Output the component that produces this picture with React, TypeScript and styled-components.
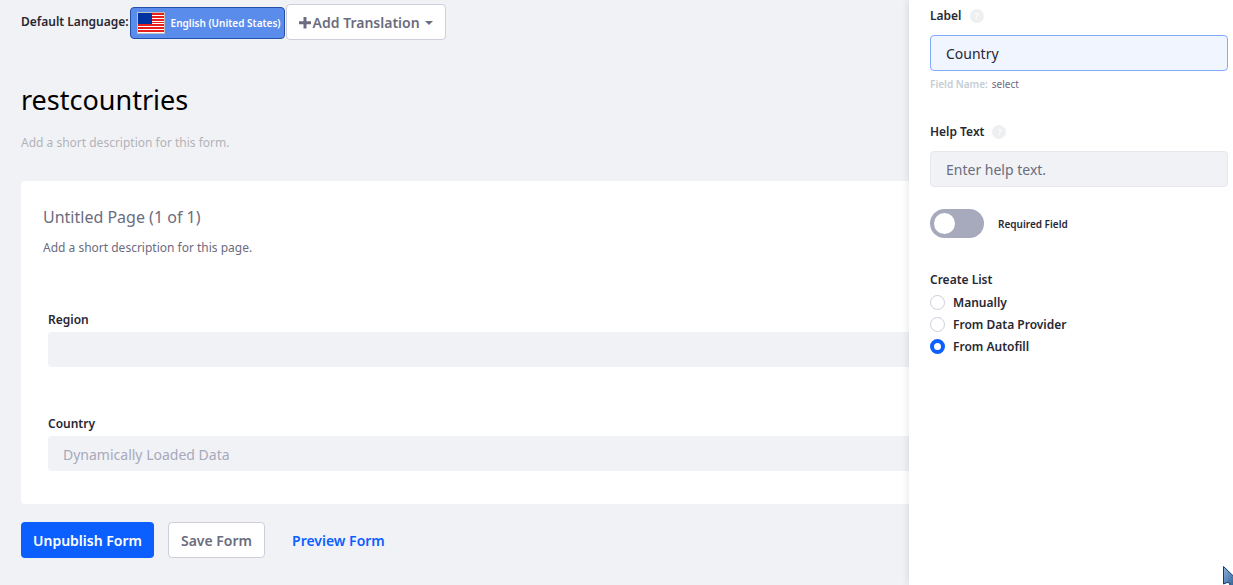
import React from "react";
import styled, { createGlobalStyle, css } from "styled-components";

const GlobalStyle = createGlobalStyle`
  *, *::before, *::after { box-sizing: border-box; }
  body {
    margin: 0;
    background: #f1f2f5;
    color: #272833;
    font-family: "Noto Sans", "Open Sans", sans-serif;
    font-size: 14px;
    line-height: 20px;
  }
  button, input { font: inherit; }
`;

const Layout = styled.div`
  display: grid;
  grid-template-columns: minmax(0, 1fr) 324px;
  min-height: 100vh;
  overflow: hidden;
`;

const Main = styled.main`
  padding: 4px 0 27px 21px;
`;

const Toolbar = styled.div`
  display: flex;
  align-items: center;
  gap: 1px;
  height: 36px;
  white-space: nowrap;
`;

const ToolbarLabel = styled.span`
  font-size: 12px;
  font-weight: 600;
`;

const Button = styled.button<{ $kind: "primary" | "secondary" | "link" | "language" }>`
  display: inline-flex;
  align-items: center;
  justify-content: center;
  height: 36px;
  padding: 2px 12px 0;
  border: 1px solid transparent;
  border-radius: 4px;
  background: transparent;
  font-size: 14px;
  font-weight: 600;
  white-space: nowrap;
  cursor: pointer;
  ${({ $kind }) => $kind === "primary" && css`
    padding: 2px 11px 0;
    background: #0b5fff;
    color: #fff;
  `}
  ${({ $kind }) => $kind === "secondary" && css`
    background: #fff;
    border-color: #cdced9;
    color: #6b6c7e;
  `}
  ${({ $kind }) => $kind === "link" && css`
    color: #0b5fff;
  `}
  ${({ $kind }) => $kind === "language" && css`
    height: 32px;
    margin-top: 2px;
    padding: 0 3px 0 6px;
    gap: 6px;
    background: #5a8cec;
    border-color: #2450a8;
    color: #fff;
    font-size: 10px;
  `}
`;

const Title = styled.h1`
  margin: 40px 0 0;
  color: #000;
  font-size: 27px;
  font-weight: 400;
  line-height: 40px;
`;

const FormDescription = styled.p`
  margin: 13px 0 28px;
  color: #b3b3b8;
  font-size: 12px;
`;

const Card = styled.section`
  min-height: 323px;
  padding: 24px 0 32px 22px;
  background: #fff;
  border-radius: 4px 0 0 4px;
`;

const PageTitle = styled.h2`
  margin: 0;
  color: #6b6c7e;
  font-size: 16px;
  font-weight: 400;
  line-height: 24px;
`;

const PageDescription = styled.p`
  margin: 9px 0 52px;
  color: #6b6c7e;
  font-size: 12px;
`;

const Field = styled.div`
  padding-left: 5px;
  & + & { margin-top: 47px; }
`;

const FieldLabel = styled.label`
  display: block;
  margin-bottom: 2px;
  font-size: 12px;
  font-weight: 600;
`;

const FieldInput = styled.input`
  display: block;
  width: 100%;
  height: 35px;
  padding: 2px 15px 0;
  border: 0;
  border-radius: 4px 0 0 4px;
  background: #f1f2f5;
  color: #272833;
  font-size: 14px;
  &::placeholder { color: #a7a9bc; opacity: 1; }
`;

const Actions = styled.div`
  display: flex;
  gap: 14px;
  margin-top: 18px;
`;

const Sidebar = styled.aside`
  position: relative;
  padding: 6px 5px 20px 21px;
  background: #fff;
  box-shadow: 0 0 8px rgba(39, 40, 51, 0.15);
`;

const LabelRow = styled.div`
  display: flex;
  align-items: center;
  gap: 8px;
  margin-bottom: 9px;
  font-size: 12px;
  font-weight: 600;
`;

const Help = styled.span`
  width: 14px;
  height: 14px;
  border-radius: 50%;
  background: #eeeff0;
  color: #fff;
  font-size: 9px;
  line-height: 14px;
  text-align: center;
`;

const TextInput = styled.input<{ $active?: boolean }>`
  display: block;
  width: 100%;
  height: 36px;
  padding: 0 15px;
  border: 1px solid ${({ $active }) => ($active ? "#80acff" : "#e7e7ed")};
  border-radius: 4px;
  background: ${({ $active }) => ($active ? "#f0f5ff" : "#f1f2f5")};
  color: #272833;
  font-size: 14px;
  outline: none;
  &::placeholder { color: #6b6c7e; opacity: 1; }
`;

const FieldName = styled.p`
  display: flex;
  gap: 4px;
  margin: 3px 0 28px;
  color: #6b6c7e;
  font-size: 10px;
  strong { color: #c4cdd5; font-weight: 600; }
`;

const ToggleLabel = styled.label`
  display: flex;
  align-items: center;
  gap: 14px;
  margin-top: 22px;
  font-size: 10px;
  font-weight: 600;
`;

const Toggle = styled.input`
  appearance: none;
  width: 54px;
  height: 29px;
  margin: 0;
  padding: 4px;
  border-radius: 15px;
  background: #a7a9bc;
  &::before {
    content: "";
    display: block;
    width: 21px;
    height: 21px;
    border-radius: 50%;
    background: #fff;
  }
  &:checked { background: #0b5fff; }
  &:checked::before { margin-left: 25px; }
`;

const Options = styled.fieldset`
  margin: 32px 0 0;
  padding: 0;
  border: 0;
  font-size: 12px;
  font-weight: 600;
`;

const Legend = styled.legend`
  padding: 0 0 2px;
`;

const RadioLabel = styled.label`
  display: flex;
  align-items: center;
  gap: 8px;
  height: 22px;
`;

const Radio = styled.input`
  appearance: none;
  width: 15px;
  height: 15px;
  margin: 0 0 2px;
  border: 1px solid #cdced9;
  border-radius: 50%;
  background: #fff;
  &:checked { border: 4px solid #0b5fff; }
`;

const Pointer = styled.svg`
  position: absolute;
  right: 0;
  bottom: 0;
`;

const Flag = () => (
  <svg width="28" height="22" viewBox="0 0 28 22" shapeRendering="crispEdges" aria-hidden="true">
    <rect width="28" height="22" fill="#c4bfc0" />
    <rect x="1" y="1" width="26" height="20" fill="#fff" />
    {[1, 4, 7, 10, 12, 15, 18].map((y) => (
      <rect key={y} x="1" y={y} width="26" height={y === 10 ? 1 : 2} fill="#e8201c" />
    ))}
    <rect x="1" y="1" width="14" height="11" fill="#0032a0" />
  </svg>
);

const PlusIcon = styled.svg`
  margin-right: 2px;
`;

const CaretIcon = styled.svg`
  margin-left: 5px;
`;

const Plus = () => (
  <PlusIcon width="12" height="12" viewBox="0 0 12 12" aria-hidden="true">
    <path d="M4.500 0h3v4.200H12v3H7.500V11.500h-3V7.200H0v-3h4.500z" fill="currentColor" />
  </PlusIcon>
);

const Caret = () => (
  <CaretIcon width="8" height="4" viewBox="0 0 8 4" aria-hidden="true">
    <path d="M0 0h8L4 4z" fill="currentColor" />
  </CaretIcon>
);

export default function App() {
  return (
    <>
      <GlobalStyle />
      <Layout>
        <Main>
          <Toolbar>
            <ToolbarLabel>Default Language:</ToolbarLabel>
            <Button type="button" $kind="language"><Flag />English (United States)</Button>
            <Button type="button" $kind="secondary"><Plus />Add Translation<Caret /></Button>
          </Toolbar>
          <Title>restcountries</Title>
          <FormDescription>Add a short description for this form.</FormDescription>
          <Card>
            <PageTitle>Untitled Page (1 of 1)</PageTitle>
            <PageDescription>Add a short description for this page.</PageDescription>
            <Field>
              <FieldLabel htmlFor="region">Region</FieldLabel>
              <FieldInput id="region" />
            </Field>
            <Field>
              <FieldLabel htmlFor="country">Country</FieldLabel>
              <FieldInput id="country" placeholder="Dynamically Loaded Data" />
            </Field>
          </Card>
          <Actions>
            <Button type="button" $kind="primary">Unpublish Form</Button>
            <Button type="button" $kind="secondary">Save Form</Button>
            <Button type="button" $kind="link">Preview Form</Button>
          </Actions>
        </Main>
        <Sidebar>
          <LabelRow><label htmlFor="label">Label</label><Help>?</Help></LabelRow>
          <TextInput id="label" defaultValue="Country" $active />
          <FieldName><strong>Field Name:</strong><span>select</span></FieldName>
          <LabelRow><label htmlFor="help">Help Text</label><Help>?</Help></LabelRow>
          <TextInput id="help" placeholder="Enter help text." />
          <ToggleLabel><Toggle type="checkbox" role="switch" />Required Field</ToggleLabel>
          <Options>
            <Legend>Create List</Legend>
            <RadioLabel><Radio type="radio" name="source" />Manually</RadioLabel>
            <RadioLabel><Radio type="radio" name="source" />From Data Provider</RadioLabel>
            <RadioLabel><Radio type="radio" name="source" defaultChecked />From Autofill</RadioLabel>
          </Options>
          <Pointer width="10" height="19" viewBox="0 0 10 19" aria-hidden="true">
            <defs>
              <linearGradient id="pointer" x1="0" y1="0" x2="1" y2="1">
                <stop offset="0" stopColor="#8db4dc" />
                <stop offset="1" stopColor="#1d4f8c" />
              </linearGradient>
            </defs>
            <path d="M.5.500L14 13.500V22H8.500L5.500 16 .5 18z" fill="url(#pointer)" stroke="#123c70" />
          </Pointer>
        </Sidebar>
      </Layout>
    </>
  );
}
